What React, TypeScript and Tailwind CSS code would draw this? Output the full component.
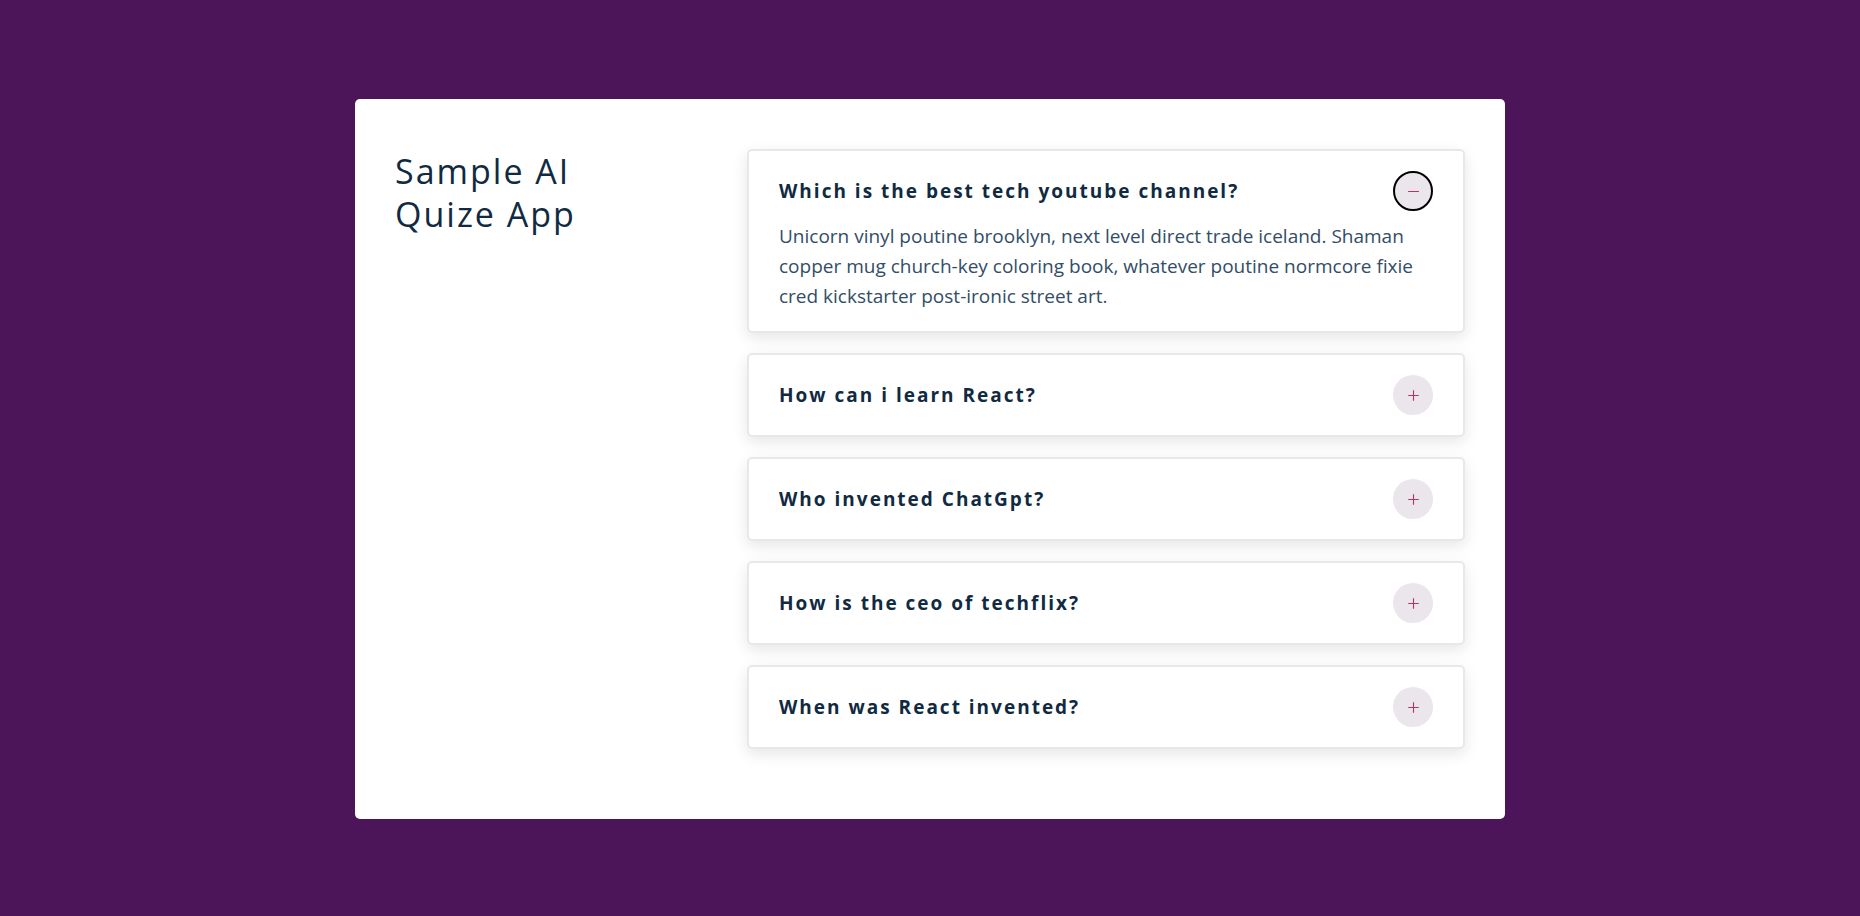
import React from "react";
import { AiOutlineMinus, AiOutlinePlus } from "react-icons/ai";

const questions = [
  {
    id: 1,
    title: "Which is the best tech youtube channel?",
    info: "Unicorn vinyl poutine brooklyn, next level direct trade iceland. Shaman copper mug church-key coloring book, whatever poutine normcore fixie cred kickstarter post-ironic street art.",
    open: true,
  },
  { id: 2, title: "How can i learn React?", info: "", open: false },
  { id: 3, title: "Who invented ChatGpt?", info: "", open: false },
  { id: 4, title: "How is the ceo of techflix?", info: "", open: false },
  { id: 5, title: "When was React invented?", info: "", open: false },
];

function Question({ title, info, open }: { title: string; info: string; open: boolean }) {
  return (
    <article className="mb-5 rounded-[5px] border-2 border-[#eae6eb] bg-white px-[30px] py-5 shadow-[0_5px_15px_rgba(0,0,0,0.1)]">
      <header className="flex items-center justify-between">
        <h4 className="m-0 text-[19px] font-bold leading-[30px] tracking-[2px] text-[#102a42]">{title}</h4>
        <button
          className={`ml-5 flex h-10 w-10 min-w-10 items-center justify-center rounded-full bg-[#eae6eb] text-[#b4345c] ${
            open ? "border-2 border-black" : "border-2 border-transparent"
          }`}
        >
          {open ? <AiOutlineMinus size={15} /> : <AiOutlinePlus size={15} />}
        </button>
      </header>
      {open && (
        <p className="mt-[10px] text-[19px] leading-[30px] text-[#324d67]">{info}</p>
      )}
    </article>
  );
}

export default function App() {
  return (
    <div
      className="min-h-[916px] w-full bg-[#4c1459] pt-[99px] pb-10"
      style={{ fontFamily: '"Segoe UI", "Open Sans", "Noto Sans", sans-serif' }}
    >
      <main className="mx-auto grid w-[1150px] grid-cols-[312px_1fr] gap-x-10 rounded-[5px] bg-white px-10 pt-[50px] pb-[50px]">
        <h3 className="m-0 pt-[1px] text-[34px] font-medium leading-[43px] tracking-[2px] text-[#102a42]">
          Sample AI
          <br />
          Quize App
        </h3>
        <section>
          {questions.map((q) => (
            <Question key={q.id} title={q.title} info={q.info} open={q.open} />
          ))}
        </section>
      </main>
    </div>
  );
}
